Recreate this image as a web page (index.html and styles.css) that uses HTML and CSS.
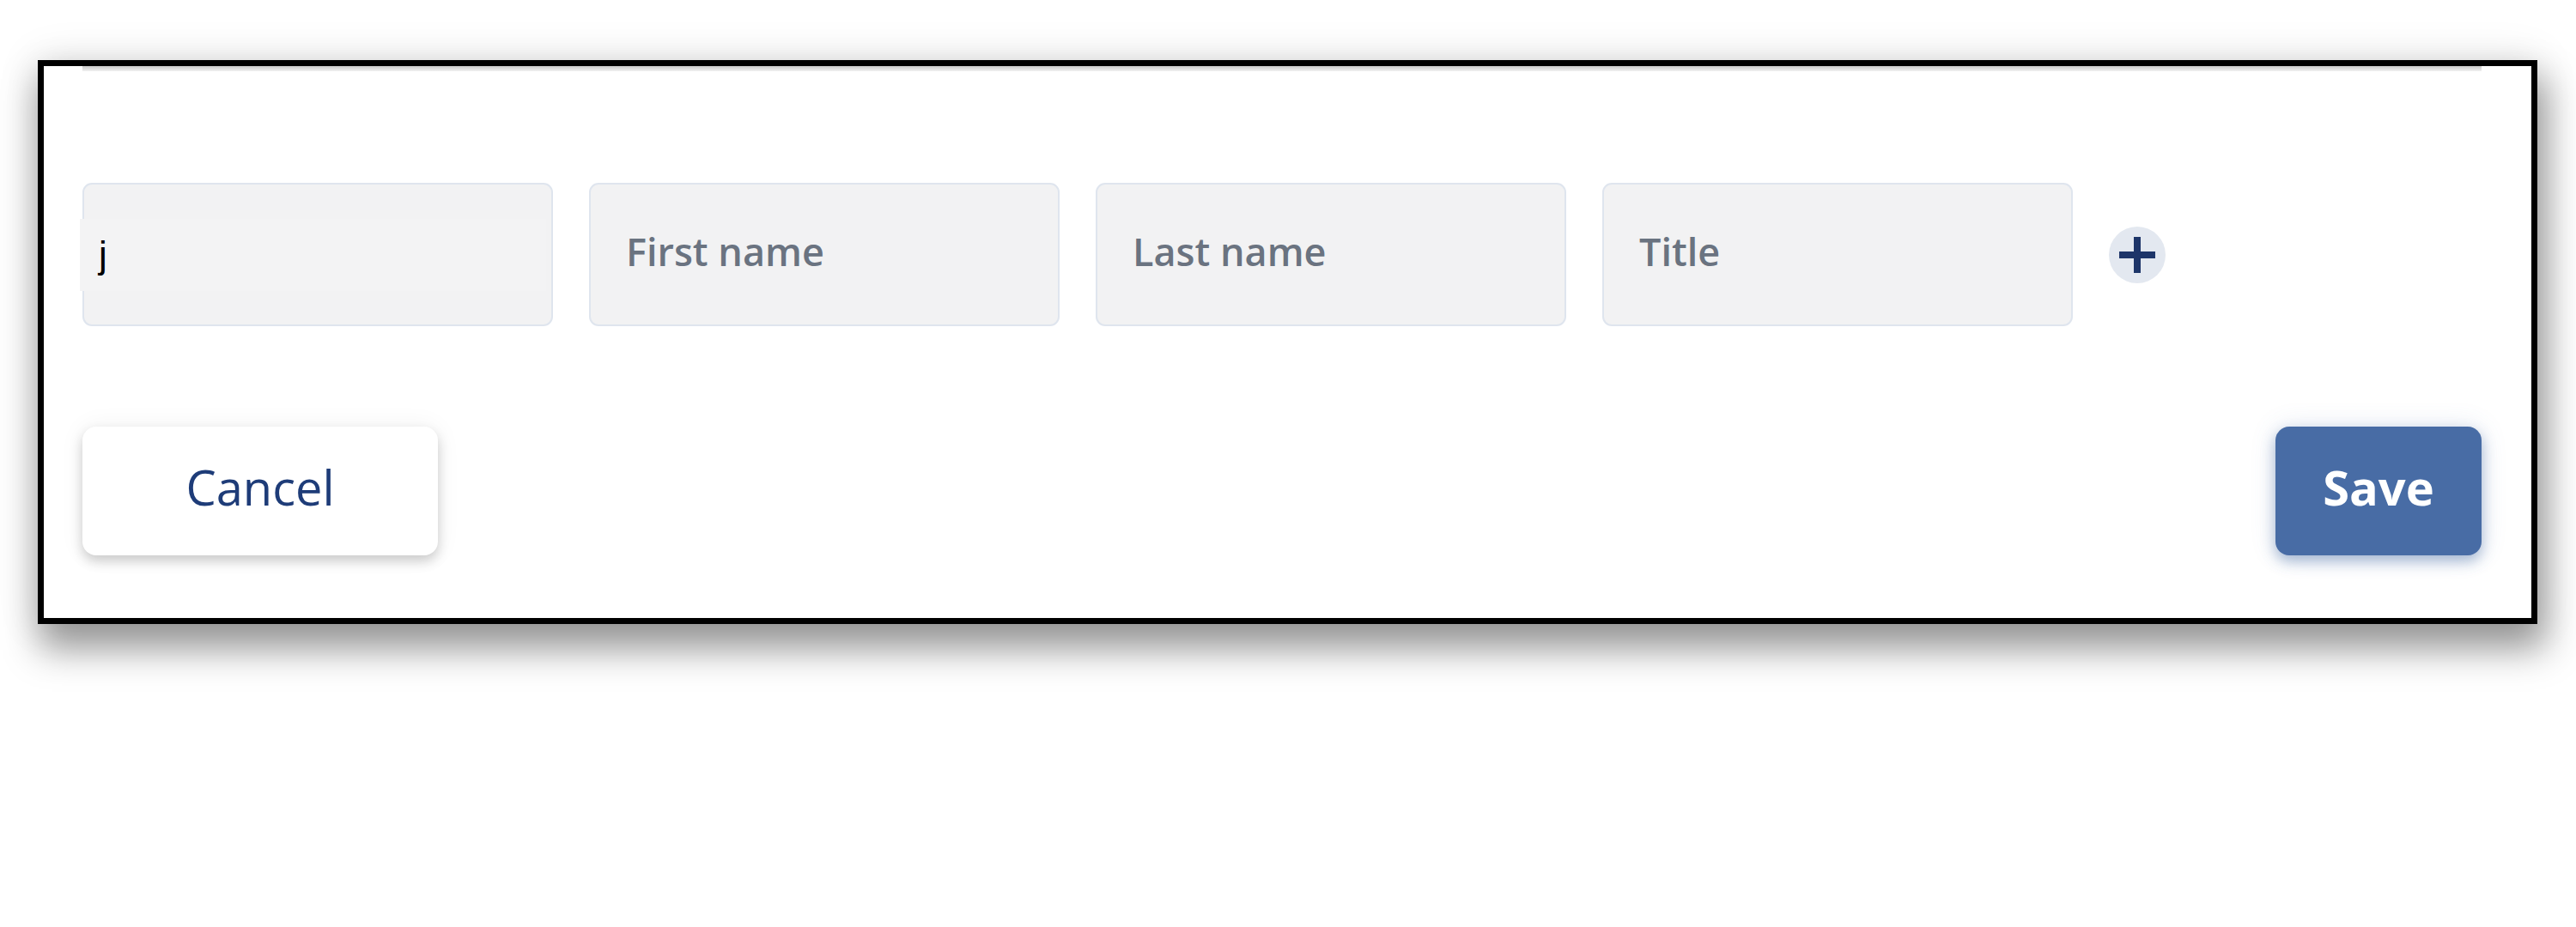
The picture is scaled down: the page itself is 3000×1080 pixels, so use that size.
FILE: index.html
```html
<!DOCTYPE html>
<html lang="en">
<head>
<meta charset="utf-8">
<title>Add contact</title>
<link rel="stylesheet" href="styles.css">
</head>
<body>
  <div class="dialog">
    <div class="divider"></div>
    <div class="fields">
      <div class="field field-active">
        <div class="entry">j</div>
      </div>
      <div class="field"><span class="placeholder">First name</span></div>
      <div class="field"><span class="placeholder">Last name</span></div>
      <div class="field"><span class="placeholder">Title</span></div>
      <div class="add-btn">
        <svg class="plus" viewBox="0 0 42 42" width="42" height="42" aria-hidden="true">
          <path d="M21 0 V42 M0 21 H42" stroke="#1d3569" stroke-width="8" fill="none"/>
        </svg>
      </div>
    </div>
    <div class="actions">
      <div class="btn btn-cancel">Cancel</div>
      <div class="btn btn-save">Save</div>
    </div>
  </div>
</body>
</html>
```

FILE: styles.css
```css
html, body {
  margin: 0;
  padding: 0;
  background: #ffffff;
}

body {
  min-height: 1080px;
  overflow: hidden;
  font-family: "Open Sans", "Liberation Sans", sans-serif;
}

.dialog {
  margin: 70px 0 0 44px;
  width: 2911px;
  height: 657px;
  box-sizing: border-box;
  border: 7px solid #000000;
  background: #ffffff;
  padding: 0 58px 0 45px;
  display: flex;
  flex-direction: column;
  box-shadow: 6px 26px 40px 4px rgba(0, 0, 0, 0.38), 0 0 45px 2px rgba(0, 0, 0, 0.1);
}

.divider {
  height: 6px;
  background: linear-gradient(to bottom, #c9c9c9, #f2f2f2);
}

.fields {
  margin-top: 130px;
  display: flex;
  align-items: center;
  gap: 42px;
}

.field {
  width: 548px;
  height: 167px;
  box-sizing: border-box;
  border: 2px solid #dfe5ee;
  border-radius: 11px;
  background: #f2f2f3;
  display: flex;
  align-items: center;
  padding: 0 0 8px 41px;
}

.placeholder {
  font-family: "Open Sans", "Liberation Sans", sans-serif;
  font-weight: 600;
  font-size: 45px;
  color: #6a7380;
  white-space: nowrap;
}

.field-active {
  padding: 0;
}

.entry {
  flex: 1;
  margin-left: -5px;
  margin-right: 6px;
  height: 84px;
  display: flex;
  align-items: center;
  padding-left: 22px;
  background: #f3f3f4;
  font-family: "Liberation Sans", Arial, sans-serif;
  font-size: 44px;
  color: #000000;
}

.add-btn {
  width: 66px;
  height: 66px;
  border-radius: 50%;
  background: #e3e8f0;
  display: flex;
  align-items: center;
  justify-content: center;
}

.plus {
  display: block;
}

.actions {
  margin-top: 117px;
  display: flex;
  justify-content: space-between;
}

.btn {
  height: 150px;
  box-sizing: border-box;
  border-radius: 16px;
  display: flex;
  align-items: center;
  justify-content: center;
  padding-bottom: 10px;
  font-family: "Open Sans", "Liberation Sans", sans-serif;
  font-size: 56px;
}

.btn-cancel {
  width: 414px;
  background: #ffffff;
  color: #1e3c78;
  font-weight: 500;
  box-shadow: 0 7px 14px rgba(0, 0, 0, 0.18), 0 0 30px rgba(0, 0, 0, 0.06);
}

.btn-save {
  width: 240px;
  background: #486ca5;
  color: #ffffff;
  font-weight: 700;
  box-shadow: 0 7px 16px rgba(72, 108, 165, 0.45), 0 0 30px rgba(72, 108, 165, 0.15);
}
```
